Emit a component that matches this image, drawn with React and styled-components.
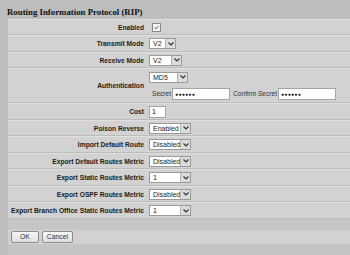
import styled, { createGlobalStyle } from "styled-components";

const GlobalStyle = createGlobalStyle`
  html, body {
    margin: 0;
    padding: 0;
    background: #bdbdbd;
    overflow: hidden;
  }
  body {
    width: 350px;
    height: 255px;
    font-family: "Liberation Sans", Arial, sans-serif;
  }
`;

const Page = styled.div`
  display: flex;
  flex-direction: column;
  width: 350px;
  height: 255px;
  overflow: hidden;
  background: #bdbdbd;
`;

const Title = styled.h1`
  margin: 0;
  height: 19px;
  padding: 7px 0 0 7px;
  box-sizing: border-box;
  font-family: "Liberation Serif", "Times New Roman", serif;
  font-size: 8.8px;
  font-weight: bold;
  color: #111;
`;

const Form = styled.div`
  display: grid;
  grid-template-columns: 139px 1fr;
  margin-left: 8px;
  background: #d2d2d2;
`;

const Label = styled.div`
  display: flex;
  align-items: center;
  justify-content: flex-end;
  height: ${(p) => p.$h || 16.5}px;
  box-sizing: border-box;
  padding-right: 3px;
  border-top: 1px solid #e0e0e0;
  border-bottom: 1px solid #bcbcbc;
  font-size: 6.7px;
  font-weight: bold;
  color: #1a1a1a;
  white-space: nowrap;
`;

const Value = styled.div`
  display: flex;
  flex-direction: ${(p) => (p.$stack ? "column" : "row")};
  align-items: ${(p) => (p.$stack ? "flex-start" : "center")};
  justify-content: ${(p) => (p.$stack ? "space-around" : "flex-start")};
  height: ${(p) => p.$h || 16.5}px;
  box-sizing: border-box;
  padding-left: 2px;
  border-top: 1px solid #e0e0e0;
  border-bottom: 1px solid #bcbcbc;
`;

const Check = styled.span`
  display: inline-flex;
  align-items: center;
  justify-content: center;
  width: 7px;
  height: 7px;
  margin-left: 3px;
  border: 1px solid #8a8a8a;
  background: #f4f4f4;
`;

const Select = styled.div`
  display: flex;
  align-items: stretch;
  width: ${(p) => p.$w}px;
  height: 11px;
  box-sizing: border-box;
  border: 1px solid #9a9a9a;
  background: #fff;
`;

const SelectText = styled.span`
  flex: 1;
  padding-left: 3px;
  font-size: 7px;
  line-height: 9px;
  color: #222;
  overflow: hidden;
  white-space: nowrap;
`;

const Arrow = styled.span`
  display: flex;
  align-items: center;
  justify-content: center;
  width: 9px;
  background: #dcdcdc;
  border-left: 1px solid #b4b4b4;
`;

const Field = styled.div`
  display: flex;
  align-items: center;
  gap: 1px;
`;

const FieldLabel = styled.span`
  font-size: 6.6px;
  color: #333;
  margin-left: ${(p) => p.$gap || 0}px;
`;

const TextBox = styled.div`
  display: flex;
  align-items: center;
  width: ${(p) => p.$w}px;
  height: 12px;
  box-sizing: border-box;
  padding-left: 2px;
  border: 1px solid #a4a4a4;
  background: #fff;
  font-size: ${(p) => (p.$dots ? 5 : 7)}px;
  letter-spacing: ${(p) => (p.$dots ? "0.3px" : "0")};
  color: #111;
`;

const Band = styled.div`
  height: ${(p) => p.$h}px;
  margin-left: 8px;
  background: ${(p) => p.$bg};
  display: flex;
  align-items: center;
  gap: 3px;
  padding-left: 3px;
`;

const Button = styled.button`
  height: 12px;
  padding: 0 ${(p) => p.$pad}px;
  border: 1px solid #8c8c8c;
  border-radius: 2px;
  background: linear-gradient(#f6f6f6, #dedede);
  font-family: "Liberation Sans", Arial, sans-serif;
  font-size: 6.8px;
  color: #333;
  line-height: 9px;
`;

const Chevron = () => (
  <svg width="6" height="4" viewBox="0 0 6 4">
    <path d="M0.5 0.5 L3 3 L5.5 0.5" fill="none" stroke="#333" strokeWidth="1.2" />
  </svg>
);

const Dropdown = ({ w, children }) => (
  <Select $w={w}>
    <SelectText>{children}</SelectText>
    <Arrow>
      <Chevron />
    </Arrow>
  </Select>
);

const SelectRow = ({ label, value }) => (
  <>
    <Label>{label}</Label>
    <Value>
      <Dropdown w={42}>{value}</Dropdown>
    </Value>
  </>
);

const rows = [
  ["Poison Reverse", "Enabled"],
  ["Import Default Route", "Disabled"],
  ["Export Default Routes Metric", "Disabled"],
  ["Export Static Routes Metric", "1"],
  ["Export OSPF Routes Metric", "Disabled"],
  ["Export Branch Office Static Routes Metric", "1"],
];

const App = () => {
  return (
    <>
      <GlobalStyle />
      <Page>
        <Title>Routing Information Protocol (RIP)</Title>
        <Form>
          <Label>Enabled</Label>
          <Value>
            <Check>
              <svg width="5" height="5" viewBox="0 0 5 5">
                <path d="M0.6 2.6 L1.9 4 L4.5 0.8" fill="none" stroke="#555" strokeWidth="0.9" />
              </svg>
            </Check>
          </Value>

          <Label>Transmit Mode</Label>
          <Value>
            <Dropdown w={27}>V2</Dropdown>
          </Value>

          <Label>Receive Mode</Label>
          <Value>
            <Dropdown w={33}>V2</Dropdown>
          </Value>

          <Label $h={35}>Authentication</Label>
          <Value $h={35} $stack>
            <Dropdown w={39}>MD5</Dropdown>
            <Field>
              <FieldLabel $gap={3}>Secret</FieldLabel>
              <TextBox $w={58} $dots>●●●●●●</TextBox>
              <FieldLabel $gap={2}>Confirm Secret</FieldLabel>
              <TextBox $w={58} $dots>●●●●●●</TextBox>
            </Field>
          </Value>

          <Label>Cost</Label>
          <Value>
            <TextBox $w={17}>1</TextBox>
          </Value>

          {rows.map(([label, value]) => (
            <SelectRow key={label} label={label} value={value} />
          ))}
        </Form>
        <Band $h={11} $bg="#c6c6c6" />
        <Band $h={15} $bg="#d2d2d2">
          <Button $pad={8}>OK</Button>
          <Button $pad={4}>Cancel</Button>
        </Band>
        <Band $h={11} $bg="#c4c4c4" />
      </Page>
    </>
  );
};

export default App;
